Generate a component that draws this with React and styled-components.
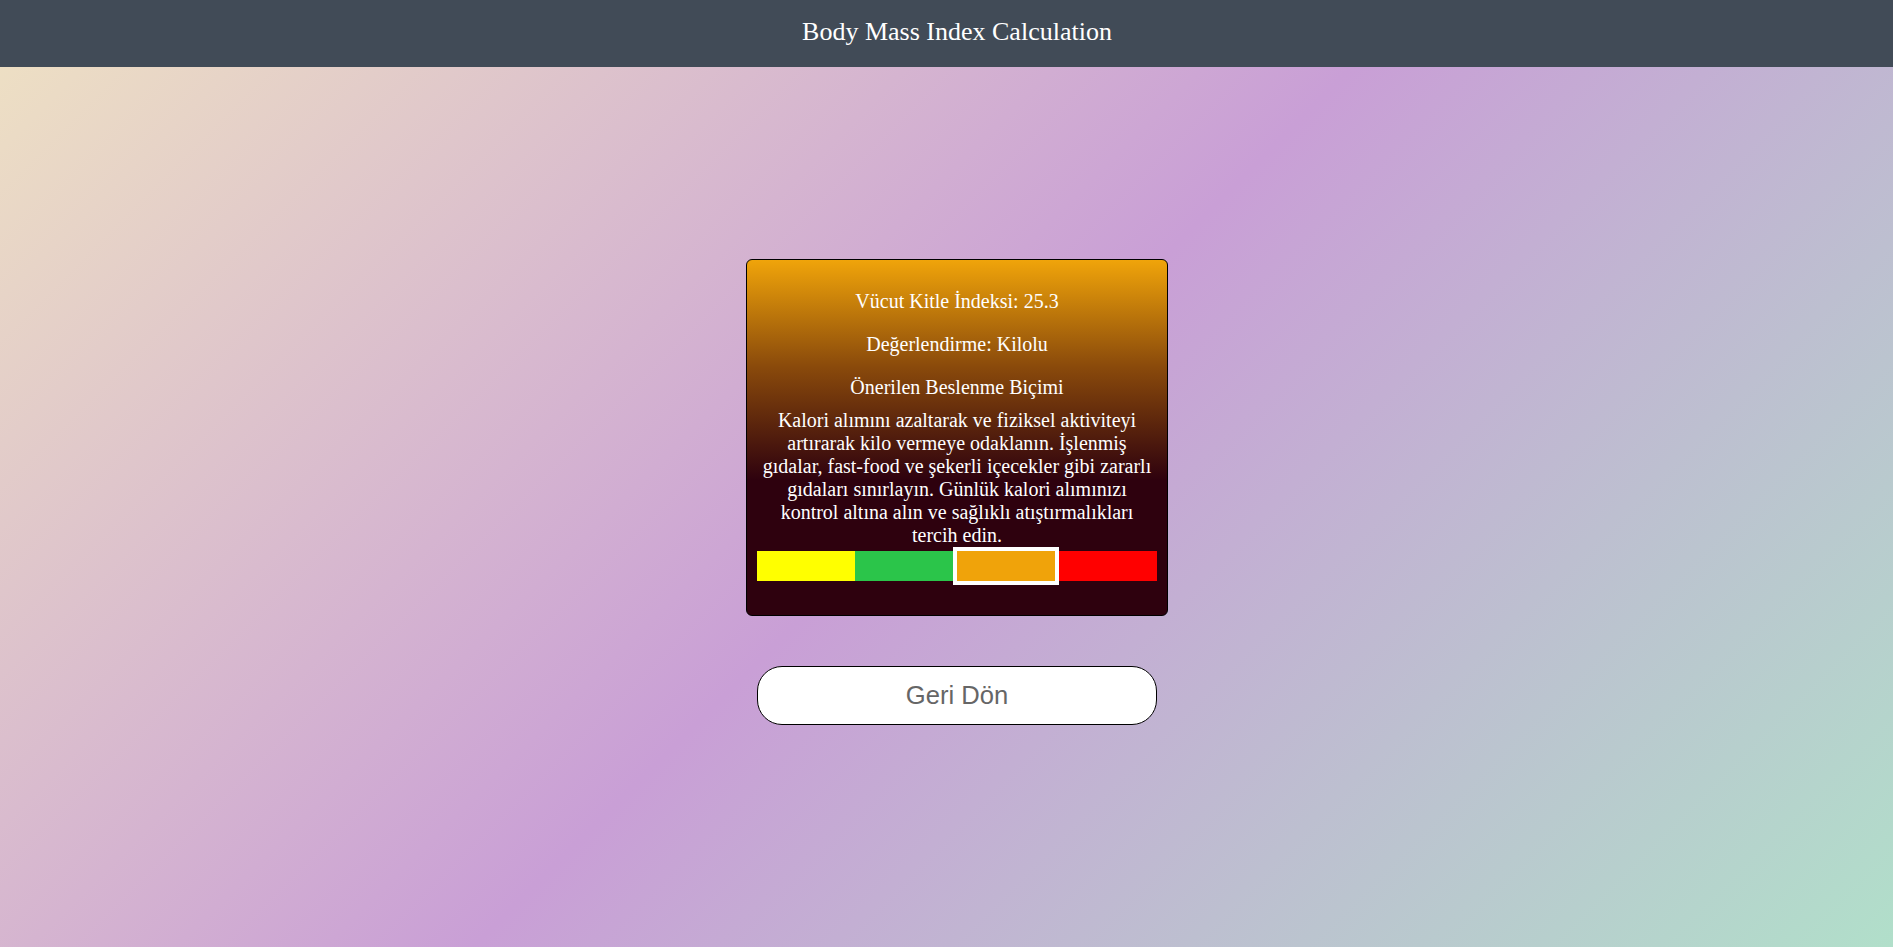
import React from "react";
import styled, { createGlobalStyle } from "styled-components";

const GlobalStyle = createGlobalStyle`
  html, body {
    margin: 0;
    padding: 0;
  }
  body {
    min-height: 100vh;
    font-family: "Liberation Serif", "Times New Roman", serif;
    background: linear-gradient(135deg, #efe2c3 0%, #c99fd6 50%, #b1dfca 100%);
    background-attachment: fixed;
  }
`;

const Header = styled.header`
  height: 67px;
  padding-left: 21px;
  background-color: #414b57;
  display: flex;
  align-items: center;
  justify-content: center;
  & > h1 {
    margin: 0 0 4px;
    color: #fff;
    font-size: 26px;
    font-weight: normal;
  }
`;

const Main = styled.main`
  display: flex;
  flex-direction: column;
  align-items: center;
  padding-top: 192px;
  padding-left: 21px;
`;

const ResultCard = styled.div`
  width: 400px;
  padding: 10px;
  border: 1px solid #000;
  border-radius: 6px;
  background: linear-gradient(to bottom, #f0a40a 0%, #8a4a0b 30%, #2e010e 62%, #2e010e 100%);
  color: #fff;
  text-align: center;
  font-size: 20px;
  & > p {
    margin: 20px 0;
  }
`;

const SubTitle = styled.p`
  && {
    margin: 20px 0 10px;
  }
`;

const Advice = styled.div`
  line-height: 23px;
`;

const Scale = styled.div`
  display: flex;
  align-items: center;
  height: 38px;
  margin-bottom: 20px;
`;

const Segment = styled.div`
  flex: 1;
  height: 30px;
  background-color: ${p => p.color};
  border: ${p => (p.active ? "4px solid #fff" : "none")};
`;

const BackButton = styled.button`
  margin-top: 50px;
  width: 400px;
  height: 59px;
  border: 1px solid #000;
  border-radius: 25px;
  background: #fff;
  color: #666;
  font-family: "Liberation Sans", Arial, sans-serif;
  font-size: 25.6px;
  cursor: pointer;
`;

const levels = [
  { color: "#ffff00" },
  { color: "#2bc54a" },
  { color: "#f0a30a", active: true },
  { color: "#ff0000" },
];

const App = () => {
  return (
    <>
      <GlobalStyle />
      <Header>
        <h1>Body Mass Index Calculation</h1>
      </Header>
      <Main>
        <ResultCard>
          <p>Vücut Kitle İndeksi: 25.3</p>
          <p>Değerlendirme: Kilolu</p>
          <SubTitle>Önerilen Beslenme Biçimi</SubTitle>
          <Advice>
            Kalori alımını azaltarak ve fiziksel aktiviteyi artırarak kilo
            vermeye odaklanın. İşlenmiş gıdalar, fast-food ve şekerli içecekler
            gibi zararlı gıdaları sınırlayın. Günlük kalori alımınızı kontrol
            altına alın ve sağlıklı atıştırmalıkları tercih edin.
          </Advice>
          <Scale>
            {levels.map((l, i) => (
              <Segment key={i} color={l.color} active={l.active} />
            ))}
          </Scale>
        </ResultCard>
        <BackButton>Geri Dön</BackButton>
      </Main>
    </>
  );
};

export default App;
